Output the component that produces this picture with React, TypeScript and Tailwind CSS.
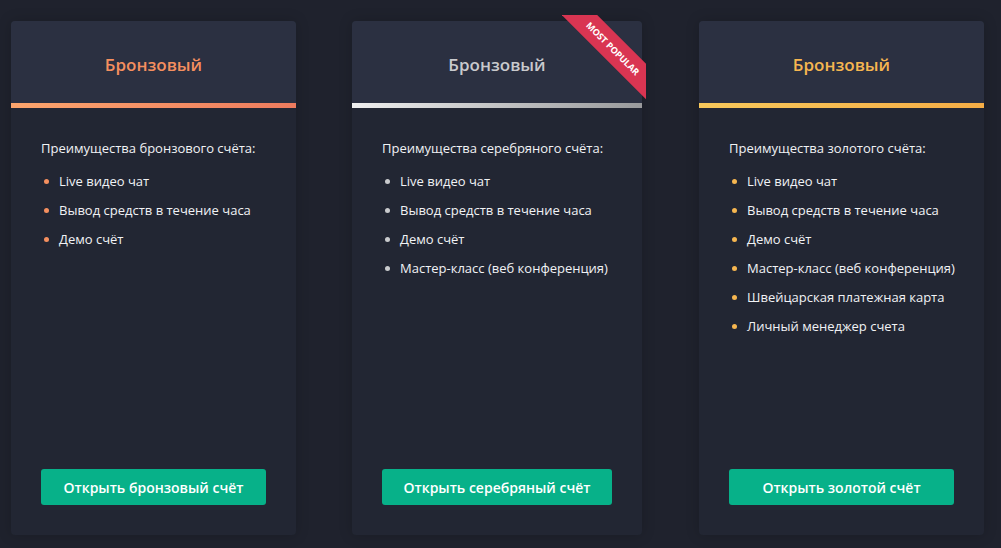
import React from "react";

type Plan = {
  title: string;
  titleColor: string;
  bar: string;
  bullet: string;
  heading: string;
  items: string[];
  button: string;
  width: string;
  popular?: boolean;
  extra?: string;
};

const plans: Plan[] = [
  {
    title: "Бронзовый",
    titleColor: "text-[#f58f5f]",
    bar: "bg-gradient-to-r from-[#fca56d] to-[#ed7b5e]",
    bullet: "bg-[#f58f5f]",
    heading: "Преимущества бронзового счёта:",
    items: ["Live видео чат", "Вывод средств в течение часа", "Демо счёт"],
    button: "Открыть бронзовый счёт",
    width: "w-[285px]",
  },
  {
    title: "Бронзовый",
    titleColor: "text-[#c9cacd]",
    bar: "bg-gradient-to-r from-[#efefef] to-[#999a9c]",
    bullet: "bg-[#c9cacd]",
    heading: "Преимущества серебряного счёта:",
    items: [
      "Live видео чат",
      "Вывод средств в течение часа",
      "Демо счёт",
      "Мастер-класс (веб конференция)",
    ],
    button: "Открыть серебряный счёт",
    width: "w-[290px]",
    popular: true,
  },
  {
    title: "Бронзовый",
    titleColor: "text-[#f6b650]",
    bar: "bg-gradient-to-r from-[#f7c85b] to-[#f5ad46]",
    bullet: "bg-[#f6b650]",
    heading: "Преимущества золотого счёта:",
    items: [
      "Live видео чат",
      "Вывод средств в течение часа",
      "Демо счёт",
      "Мастер-класс (веб конференция)",
      "Швейцарская платежная карта",
      "Личный менеджер счета",
    ],
    button: "Открыть золотой счёт",
    width: "w-[285px]",
    extra: "ml-px",
  },
];

function Card({ p }: { p: Plan }) {
  return (
    <div
      className={`relative ${p.width} ${p.extra ?? ""} h-[514px] flex flex-col rounded-[4px] bg-[#222633] shadow-[0_0_14px_rgba(0,0,0,0.18)]`}
    >
      <div className="h-[82px] rounded-t-[4px] bg-[#2b3041] flex items-center justify-center pt-[6px]">
        <span className={`text-[17px] font-semibold ${p.titleColor}`}>{p.title}</span>
      </div>
      <div className={`h-[5px] ${p.bar}`} />
      <div className="flex-1 flex flex-col px-[30px] pt-[30px] pb-[30px]">
        <p className="text-[13px] leading-[20px] text-[#f1f2f5] whitespace-nowrap">{p.heading}</p>
        <ul className="mt-[13px] flex flex-col gap-[9px]">
          {p.items.map((it) => (
            <li
              key={it}
              className="flex items-center text-[13px] leading-[20px] text-[#f1f2f5] whitespace-nowrap"
            >
              <span className={`shrink-0 ml-[3px] mr-[10px] w-[5px] h-[5px] rounded-full ${p.bullet}`} />
              {it}
            </li>
          ))}
        </ul>
        <button className="mt-auto h-[36px] w-full rounded-[3px] bg-[#07b189] text-white text-[14px] font-semibold">
          {p.button}
        </button>
      </div>
      {p.popular && (
        <div className="absolute top-[-6px] right-[-4px] w-[84px] h-[85px] overflow-hidden pointer-events-none">
          <div className="absolute left-[-14px] top-[21px] w-[130px] h-[25px] rotate-45 bg-[#d93552] flex items-center justify-center">
            <span className="text-[9px] font-bold text-white leading-none whitespace-nowrap">
              MOST POPULAR
            </span>
          </div>
        </div>
      )}
    </div>
  );
}

export default function App() {
  return (
    <div
      className="w-[1001px] h-[548px] bg-[#1f222d] overflow-hidden"
      style={{ fontFamily: '"Open Sans", "Noto Sans", sans-serif' }}
    >
      <div className="flex gap-[56px] pl-[11px] pt-[21px]">
        {plans.map((p, i) => (
          <Card key={i} p={p} />
        ))}
      </div>
    </div>
  );
}
